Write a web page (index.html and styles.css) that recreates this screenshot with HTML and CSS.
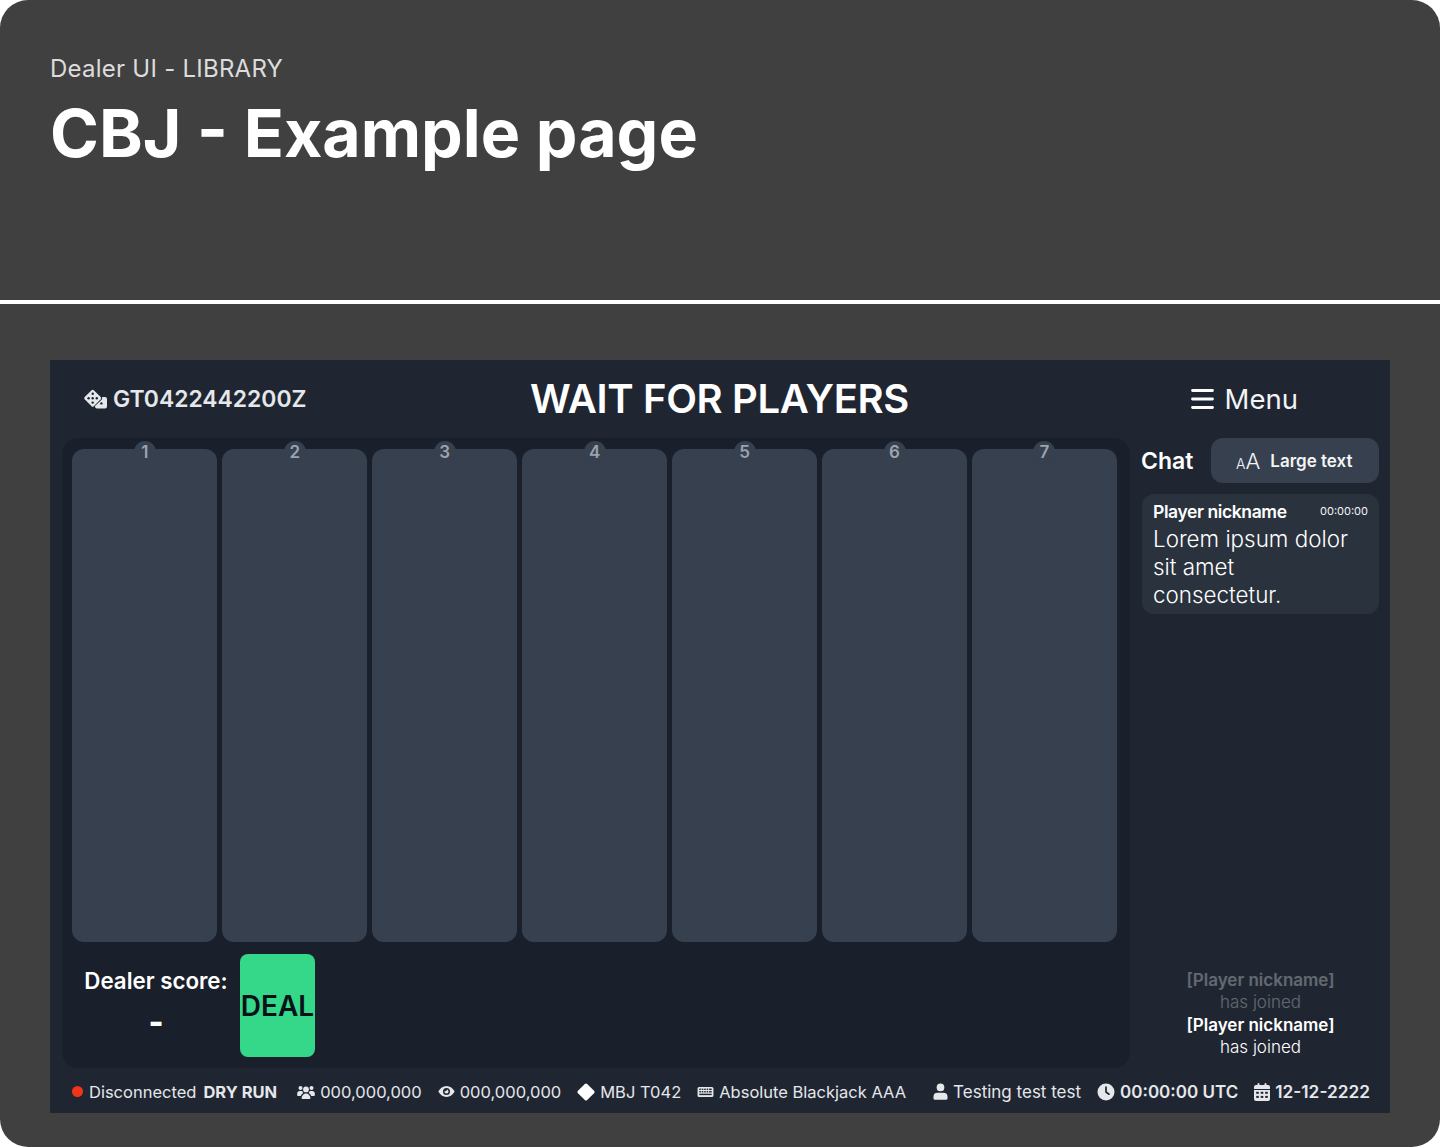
FILE: index.html
```html
<!DOCTYPE html>
<html lang="en">
<head>
<meta charset="utf-8">
<title>CBJ - Example page</title>
<link rel="stylesheet" href="styles.css">
</head>
<body>
<div class="sheet">
  <header class="head">
    <div class="crumb">Dealer UI - LIBRARY</div>
    <h1 class="title">CBJ - Example page</h1>
  </header>
  <div class="rule"></div>
  <section class="stage">
    <div class="frame">
      <div class="topbar">
        <div class="game-id">
          <svg class="ico-dice" viewBox="0 0 24 20"><path fill="#e5e7eb" d="M8.600 1.200a1.600 1.600 0 0 1 2.200 0l6.900 6.900a1.600 1.600 0 0 1 0 2.200l-6.900 6.900a1.600 1.600 0 0 1-2.200 0L1.700 10.300a1.600 1.600 0 0 1 0-2.200z"/><path fill="#e5e7eb" d="M19 8h3a2 2 0 0 1 2 2v7.600a2 2 0 0 1-2 2h-8a2 2 0 0 1-2-2v-.6l6.600-6.200A2.600 2.600 0 0 0 19 8z"/><g fill="#1f2632"><circle cx="9.700" cy="4.800" r="1.200"/><circle cx="5.600" cy="9.200" r="1.200"/><circle cx="9.700" cy="9.200" r="1.200"/><circle cx="13.800" cy="9.200" r="1.200"/><circle cx="9.700" cy="13.600" r="1.200"/><circle cx="18.400" cy="14.400" r="1.200"/></g></svg>
          <span>GT0422442200Z</span>
        </div>
        <div class="status-title">WAIT FOR PLAYERS</div>
        <div class="menu">
          <svg class="ico-menu" viewBox="0 0 23 22"><path d="M1.500 2.500h20M1.500 11h20M1.500 19.500h20" stroke="#fff" stroke-width="2.800" stroke-linecap="round" fill="none"/></svg>
          <span>Menu</span>
        </div>
      </div>
      <div class="body">
        <main class="table">
          <div class="seats">
            <div class="seat"><span class="seat-no">1</span></div>
            <div class="seat"><span class="seat-no">2</span></div>
            <div class="seat"><span class="seat-no">3</span></div>
            <div class="seat"><span class="seat-no">4</span></div>
            <div class="seat"><span class="seat-no">5</span></div>
            <div class="seat"><span class="seat-no">6</span></div>
            <div class="seat"><span class="seat-no">7</span></div>
          </div>
          <div class="dealer-row">
            <div class="dealer">
              <div class="dealer-label">Dealer score:</div>
              <div class="dealer-value">-</div>
            </div>
            <button class="deal" type="button">DEAL</button>
          </div>
        </main>
        <aside class="chat">
          <div class="chat-head">
            <span class="chat-title">Chat</span>
            <div class="large-btn">
              <span class="aa"><span class="aa-s">A</span><span class="aa-l">A</span></span>
              <span>Large text</span>
            </div>
          </div>
          <div class="msg">
            <div class="msg-top"><span class="msg-name">Player nickname</span><span class="msg-time">00:00:00</span></div>
            <div class="msg-text">Lorem ipsum dolor sit amet consectetur.</div>
          </div>
          <div class="joins">
            <div class="join faded"><b>[Player nickname]</b><br>has joined</div>
            <div class="join"><b>[Player nickname]</b><br>has joined</div>
          </div>
        </aside>
      </div>
      <footer class="status">
        <div class="item"><i class="dot"></i><span>Disconnected</span><b class="dry">DRY RUN</b></div>
        <div class="item">
          <svg class="ico ico-people" viewBox="0 0 18 14"><g fill="#e5e7eb"><circle cx="9" cy="4.400" r="2.900"/><circle cx="3.500" cy="3" r="2"/><circle cx="14.500" cy="3" r="2"/><path d="M4.600 13a4.400 4.400 0 0 1 8.800 0v.2a.8.800 0 0 1-.8.800H5.400a.8.800 0 0 1-.8-.8z"/><path d="M.2 9a2.800 2.800 0 0 1 2.800-3h1.600c.3 0 .6.100.8.200A4 4 0 0 0 6.300 8a5.600 5.600 0 0 0-2.600 3H1a.8.800 0 0 1-.8-.8zM17.800 9A2.800 2.800 0 0 0 15 6h-1.600c-.3 0-.6.100-.8.200A4 4 0 0 1 11.700 8a5.600 5.600 0 0 1 2.600 3H17a.8.800 0 0 0 .8-.8z"/></g></svg>
          <span>000,000,000</span>
        </div>
        <div class="item">
          <svg class="ico ico-eye" viewBox="0 0 18 14"><path fill="#e5e7eb" fill-rule="evenodd" d="M9 1c3.800 0 6.900 2.500 8.600 5.600a.9.900 0 0 1 0 .8C15.900 10.500 12.800 13 9 13S2.100 10.500.4 7.400a.9.900 0 0 1 0-.8C2.100 3.500 5.200 1 9 1zm0 2.200a3.800 3.800 0 1 0 0 7.600 3.800 3.800 0 0 0 0-7.600zm0 1.600a2.200 2.200 0 1 1-2.200 2.200c0-.2 0-.3.100-.5.300.2.600.3.900.3a1.400 1.400 0 0 0 1.400-1.400c0-.2 0-.4-.1-.6z"/></svg>
          <span>000,000,000</span>
        </div>
        <div class="item">
          <svg class="ico ico-diamond" viewBox="0 0 18 18"><path fill="#fff" d="M7.800 1a1.700 1.700 0 0 1 2.400 0l6.800 6.800a1.700 1.700 0 0 1 0 2.400L10.200 17a1.700 1.700 0 0 1-2.400 0L1 10.200a1.700 1.700 0 0 1 0-2.400z"/></svg>
          <span>MBJ T042</span>
        </div>
        <div class="item">
          <svg class="ico ico-keys" viewBox="0 0 18 12"><rect x=".6" y=".6" width="16.800" height="10.800" rx="1.600" fill="#e5e7eb"/><g fill="#1f2632"><rect x="2.400" y="2.400" width="1.700" height="1.500"/><rect x="5" y="2.400" width="1.700" height="1.500"/><rect x="7.600" y="2.400" width="1.700" height="1.500"/><rect x="10.200" y="2.400" width="1.700" height="1.500"/><rect x="12.800" y="2.400" width="2.800" height="1.500"/><rect x="2.400" y="5" width="1.700" height="1.500"/><rect x="5" y="5" width="1.700" height="1.500"/><rect x="7.600" y="5" width="1.700" height="1.500"/><rect x="10.200" y="5" width="1.700" height="1.500"/><rect x="12.800" y="5" width="2.800" height="1.500"/><rect x="2.400" y="7.800" width="13.200" height="1.500"/></g></svg>
          <span>Absolute Blackjack AAA</span>
        </div>
        <div class="item push">
          <svg class="ico ico-user" viewBox="0 0 16 18"><circle cx="8" cy="4.600" r="4.100" fill="#e5e7eb"/><path fill="#e5e7eb" d="M4.800 10.300h6.400A4.300 4.300 0 0 1 15.500 14.600v1.900a1.200 1.200 0 0 1-1.200 1.200H1.700a1.200 1.200 0 0 1-1.200-1.200v-1.900a4.300 4.300 0 0 1 4.300-4.300z"/></svg>
          <span class="user-name">Testing test test</span>
        </div>
        <div class="item strong">
          <svg class="ico ico-clock" viewBox="0 0 18 18"><circle cx="9" cy="9" r="8.500" fill="#e5e7eb"/><path d="M9 4.200V9l3 2.200" stroke="#1f2632" stroke-width="1.700" stroke-linecap="round" fill="none"/></svg>
          <span>00:00:00 UTC</span>
        </div>
        <div class="item strong">
          <svg class="ico ico-cal" viewBox="0 0 16 18"><path fill="#e5e7eb" d="M4.500 0a1 1 0 0 1 1 1v1h5V1a1 1 0 1 1 2 0v1h1.500A2 2 0 0 1 16 4v2H0V4a2 2 0 0 1 2-2h1.500V1a1 1 0 0 1 1-1zM0 7h16v9a2 2 0 0 1-2 2H2a2 2 0 0 1-2-2z"/><g fill="#1f2632"><rect x="2.200" y="8.800" width="2.600" height="2"/><rect x="6.700" y="8.800" width="2.600" height="2"/><rect x="11.200" y="8.800" width="2.600" height="2"/><rect x="2.200" y="12.900" width="2.600" height="2"/><rect x="6.700" y="12.900" width="2.600" height="2"/><rect x="11.200" y="12.900" width="2.600" height="2"/></g></svg>
          <span class="date">12-12-2222</span>
        </div>
      </footer>
    </div>
  </section>
</div>
</body>
</html>
```
FILE: styles.css
```css
* { box-sizing: border-box; }
html, body { margin: 0; padding: 0; background: #fff; }
body { font-family: Inter, "Liberation Sans", sans-serif; color: #fff; }

.sheet {
  width: 1440px;
  height: 1147px;
  background: #404040;
  border-radius: 28px;
  overflow: hidden;
  display: flex;
  flex-direction: column;
}

.head { height: 300px; padding: 53px 50px 0 50px; }
.crumb { font-size: 24px; line-height: 32px; color: #dcdcdc; letter-spacing: 0.25px; }
.title { margin: 11px 0 0; font-size: 66.200px; line-height: 74px; font-weight: 700; letter-spacing: 0; }
.rule { height: 4px; background: #fff; }

.stage { flex: 1; padding: 56px 50px 34px; }
.frame { height: 753px; background: #1f2632; display: flex; flex-direction: column; }

.topbar {
  height: 78px;
  padding: 0 34px 0 33px;
  display: grid;
  grid-template-columns: 1fr auto 1fr;
  align-items: center;
}
.game-id { display: flex; align-items: center; gap: 6px; font-size: 22.900px; font-weight: 600; color: #e5e7eb; }
.ico-dice { width: 24px; height: 20px; flex: none; }
.status-title { font-size: 40px; font-weight: 600; line-height: 44px; letter-spacing: -0.35px; }
.menu { justify-self: end; margin-right: 58px; display: flex; align-items: center; gap: 11px; font-size: 27.500px; font-weight: 400; color: #f3f4f6; }
.ico-menu { width: 23px; height: 22px; flex: none; }

.body { flex: 1; min-height: 0; display: flex; padding: 0 11px 0 12px; gap: 12px; }

.table {
  width: 1068px;
  background: #1a202b;
  border-radius: 16px;
  padding: 11px 13px 11px 10.400px;
  display: flex;
  flex-direction: column;
}
.seats { height: 493px; display: flex; gap: 5px; }
.seat { position: relative; width: 145px; background: #36404e; border-radius: 12px; }
.seat-no {
  position: absolute;
  top: -8px;
  left: 50%;
  width: 22px;
  height: 22px;
  margin-left: -11px;
  border-radius: 50%;
  background: #36404e;
  color: #9ca3af;
  font-size: 17px;
  font-weight: 600;
  line-height: 23px;
  text-align: center;
}

.dealer-row { display: flex; margin-top: 12px; height: 103px; }
.dealer { width: 167.600px; padding: 13px 0 0 11.600px; text-align: center; }
.dealer-label { width: 144px; font-size: 22.300px; line-height: 28px; font-weight: 600; white-space: nowrap; }
.dealer-value { width: 144px; margin-top: 13px; font-size: 32px; line-height: 28px; font-weight: 800; }
.deal {
  width: 75px;
  height: 103px;
  padding: 0;
  border: 0;
  border-radius: 8px;
  background: #34d888;
  color: #0b1118;
  font-family: inherit;
  font-size: 28px;
  font-weight: 600;
  text-align: center;
  white-space: nowrap;
}

.chat { flex: 1; min-width: 0; display: flex; flex-direction: column; }
.chat-head { display: flex; align-items: center; justify-content: space-between; height: 45px; }
.chat-title { font-size: 23px; font-weight: 600; margin-left: -1px; }
.large-btn {
  width: 168px;
  height: 45px;
  border-radius: 12px;
  background: #36404e;
  display: flex;
  align-items: center;
  gap: 10px;
  padding-left: 25px;
  font-size: 17px;
  font-weight: 600;
  color: #f3f4f6;
}
.aa { display: inline-flex; align-items: baseline; font-weight: 300; }
.aa-s { font-size: 14px; }
.aa-l { font-size: 22px; }

.msg { margin-top: 11px; padding: 6px 11px 5px; background: #2a323e; border-radius: 12px; }
.msg-top { display: flex; justify-content: space-between; align-items: center; height: 22px; }
.msg-name { font-size: 17.500px; font-weight: 600; letter-spacing: -0.4px; }
.msg-time { font-size: 11px; color: #f3f4f6; }
.msg-text { margin-top: 3px; font-size: 22.400px; line-height: 28px; font-weight: 300; }

.joins { margin-top: auto; padding-bottom: 9.500px; text-align: center; font-size: 17px; line-height: 22.400px; }
.join b { font-weight: 600; }
.join { font-weight: 300; }
.faded { opacity: 0.3; }

.status {
  height: 45px;
  padding: 2px 19px 0 22px;
  display: flex;
  align-items: center;
  gap: 16px;
  font-size: 16.500px;
  color: #e5e7eb;
  white-space: nowrap;
}
.item { display: flex; align-items: center; gap: 5px; }
.item:first-child { margin-right: 4px; }
.push { margin-left: 11px; }
.dot { width: 11px; height: 11px; border-radius: 50%; background: #f0361a; margin-right: 1px; }
.dry { font-weight: 700; margin-left: 2px; }
.ico { flex: none; }
.ico-people { width: 18px; height: 14px; }
.ico-eye { width: 17px; height: 13px; }
.ico-diamond { width: 18px; height: 18px; }
.ico-keys { width: 17px; height: 12px; }
.ico-user { width: 15px; height: 17px; }
.ico-clock { width: 18px; height: 18px; }
.ico-cal { width: 16px; height: 18px; }
.user-name { font-size: 17px; }
.strong { font-weight: 600; font-size: 17px; }
.date { font-size: 17.300px; }
```
